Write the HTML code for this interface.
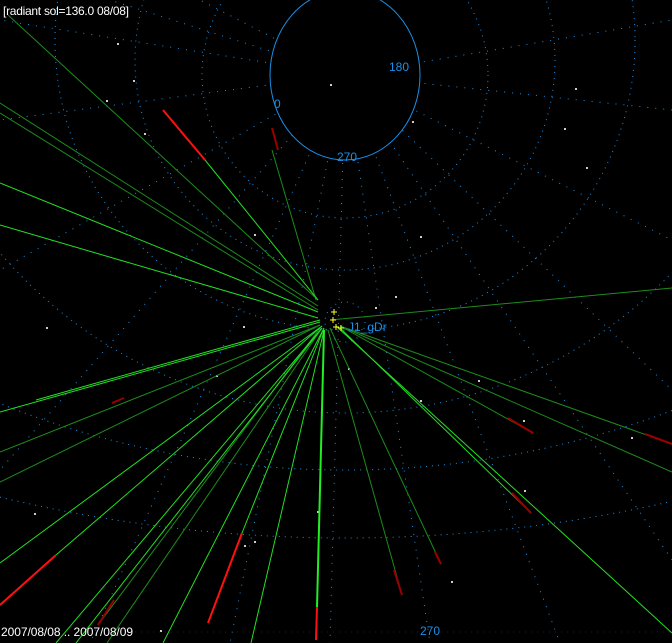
<!DOCTYPE html>
<html><head><meta charset="utf-8"><style>
html,body{margin:0;padding:0;background:#000;width:672px;height:643px;overflow:hidden}
svg{display:block}
text{font-family:"Liberation Sans","DejaVu Sans",sans-serif;font-size:12px}
</style></head><body>
<svg width="672" height="643" viewBox="0 0 672 643" xmlns="http://www.w3.org/2000/svg">
<rect width="672" height="643" fill="#000"/>
<g fill="none" stroke="#1a8fe8" stroke-width="1" stroke-dasharray="1 5">
<circle cx="345" cy="75" r="143"/>
<circle cx="345" cy="60" r="210"/>
<circle cx="345" cy="40" r="290"/>
<ellipse cx="345" cy="-60" rx="460" ry="473"/>
<ellipse cx="345" cy="-400" rx="900" ry="870"/>
<ellipse cx="345" cy="-1200" rx="1600" ry="1738"/>
<circle cx="345" cy="322" r="20"/>
<g stroke-dasharray="1 7">
<line x1="345" y1="75" x2="0" y2="270"/>
<line x1="345" y1="75" x2="0" y2="470"/>
<line x1="345" y1="75" x2="90" y2="643"/>
<line x1="345" y1="75" x2="230" y2="643"/>
<line x1="345" y1="75" x2="330" y2="643"/>
<line x1="345" y1="75" x2="430" y2="643"/>
<line x1="345" y1="75" x2="560" y2="643"/>
<line x1="345" y1="75" x2="672" y2="560"/>
<line x1="345" y1="75" x2="672" y2="390"/>
<line x1="345" y1="75" x2="672" y2="240"/>
<line x1="345" y1="75" x2="672" y2="110"/>
<line x1="345" y1="75" x2="672" y2="20"/>
<line x1="345" y1="75" x2="0" y2="120"/>
<line x1="345" y1="75" x2="110" y2="0"/>
<line x1="345" y1="75" x2="200" y2="0"/>
<line x1="345" y1="75" x2="0" y2="20"/>
</g>
</g>
<ellipse cx="345" cy="75" rx="75" ry="85" fill="#000" stroke="#1a8fe8" stroke-width="1"/>
<line x1="135" y1="632" x2="672" y2="632" stroke="#6a0000" stroke-dasharray="1 5"/>
<g fill="#ccc">
<rect x="117" y="43" width="2" height="2"/><rect x="133" y="80" width="2" height="2"/><rect x="106" y="100" width="2" height="2"/><rect x="144" y="133" width="2" height="2"/><rect x="46" y="327" width="2" height="2"/><rect x="216" y="375" width="2" height="2"/><rect x="348" y="368" width="2" height="2"/><rect x="254" y="234" width="2" height="2"/><rect x="243" y="326" width="2" height="2"/><rect x="420" y="236" width="2" height="2"/><rect x="564" y="128" width="2" height="2"/><rect x="575" y="88" width="2" height="2"/><rect x="586" y="167" width="2" height="2"/><rect x="420" y="400" width="2" height="2"/><rect x="34" y="513" width="2" height="2"/><rect x="244" y="545" width="2" height="2"/><rect x="451" y="581" width="2" height="2"/><rect x="523" y="420" width="2" height="2"/><rect x="631" y="437" width="2" height="2"/><rect x="395" y="296" width="2" height="2"/><rect x="375" y="307" width="2" height="2"/><rect x="317" y="511" width="2" height="2"/><rect x="254" y="541" width="2" height="2"/><rect x="524" y="490" width="2" height="2"/><rect x="330" y="84" width="2" height="2"/><rect x="412" y="121" width="2" height="2"/><rect x="478" y="380" width="2" height="2"/><rect x="160" y="630" width="2" height="2"/></g>
<g stroke="#1c8c1c" stroke-width="1" fill="none">
<line x1="8" y1="15" x2="318" y2="300"/>
<line x1="0" y1="103" x2="318" y2="306"/>
<line x1="0" y1="113" x2="318" y2="310"/>
<line x1="272" y1="150" x2="316" y2="300"/>
<line x1="0" y1="482" x2="320" y2="325"/>
<line x1="0" y1="452" x2="320" y2="325"/>
<line x1="98" y1="625" x2="320" y2="328"/>
<line x1="107" y1="643" x2="322" y2="328"/>
<line x1="672" y1="288" x2="330" y2="320"/>
<line x1="672" y1="444" x2="340" y2="326"/>
<line x1="672" y1="472" x2="340" y2="326"/>
<line x1="441" y1="564" x2="330" y2="328"/>
<line x1="533" y1="433" x2="340" y2="326"/>
<line x1="402" y1="595" x2="328" y2="330"/>
</g>
<g stroke="#22e022" stroke-width="1" fill="none">
<line x1="0" y1="183" x2="318" y2="312"/>
<line x1="0" y1="225" x2="318" y2="318"/>
<line x1="205" y1="160" x2="318" y2="300"/>
<line x1="36" y1="400" x2="320" y2="320"/>
<line x1="0" y1="412" x2="320" y2="322"/>
<line x1="0" y1="563" x2="322" y2="326"/>
<line x1="56" y1="555" x2="322" y2="326"/>
<line x1="56" y1="643" x2="322" y2="328"/>
<line x1="76" y1="643" x2="322" y2="328"/>
<line x1="163" y1="643" x2="324" y2="328"/>
<line x1="242" y1="533" x2="324" y2="328"/>
<line x1="251" y1="643" x2="324" y2="330"/>
<line x1="672" y1="633" x2="336" y2="326"/>
<line x1="531" y1="513" x2="340" y2="328"/>
</g>
<line x1="324" y1="330" x2="317" y2="607" stroke="#22ee22" stroke-width="2"/>
<g stroke="#ff1010" stroke-width="2">
<line x1="163" y1="110" x2="205" y2="160"/>
<line x1="0" y1="605" x2="56" y2="555"/>
<line x1="208" y1="623" x2="242" y2="533"/>
<line x1="316" y1="640" x2="317" y2="607"/>
</g>
<g stroke="#9a0000" stroke-width="2">
<line x1="272" y1="128" x2="278" y2="150"/>
<line x1="112" y1="403" x2="124" y2="398"/>
<line x1="98" y1="625" x2="114" y2="600"/>
<line x1="394" y1="570" x2="402" y2="595"/>
<line x1="435" y1="552" x2="441" y2="564"/>
<line x1="508" y1="418" x2="533" y2="433"/>
<line x1="512" y1="493" x2="531" y2="513"/>
<line x1="645" y1="434" x2="672" y2="444"/>
</g>
<g stroke="#ffff30" stroke-width="1">
<path d="M331 312h6M334 309v6M330 320h6M333 317v6M333 327h6M336 324v6M338 328h6M341 325v6"/>
</g>
<g fill="#1a8fe8">
<text x="274" y="108">0</text>
<text x="389" y="71">180</text>
<text x="337" y="161">270</text>
<text x="420" y="635">270</text>
<text x="348" y="331">J1_gDr</text>
</g>
<g fill="#fff">
<text x="3" y="15" textLength="126">[radiant sol=136.0 08/08]</text>
<text x="1" y="636" textLength="132">2007/08/08 .. 2007/08/09</text>
</g>
</svg>
</body></html>
